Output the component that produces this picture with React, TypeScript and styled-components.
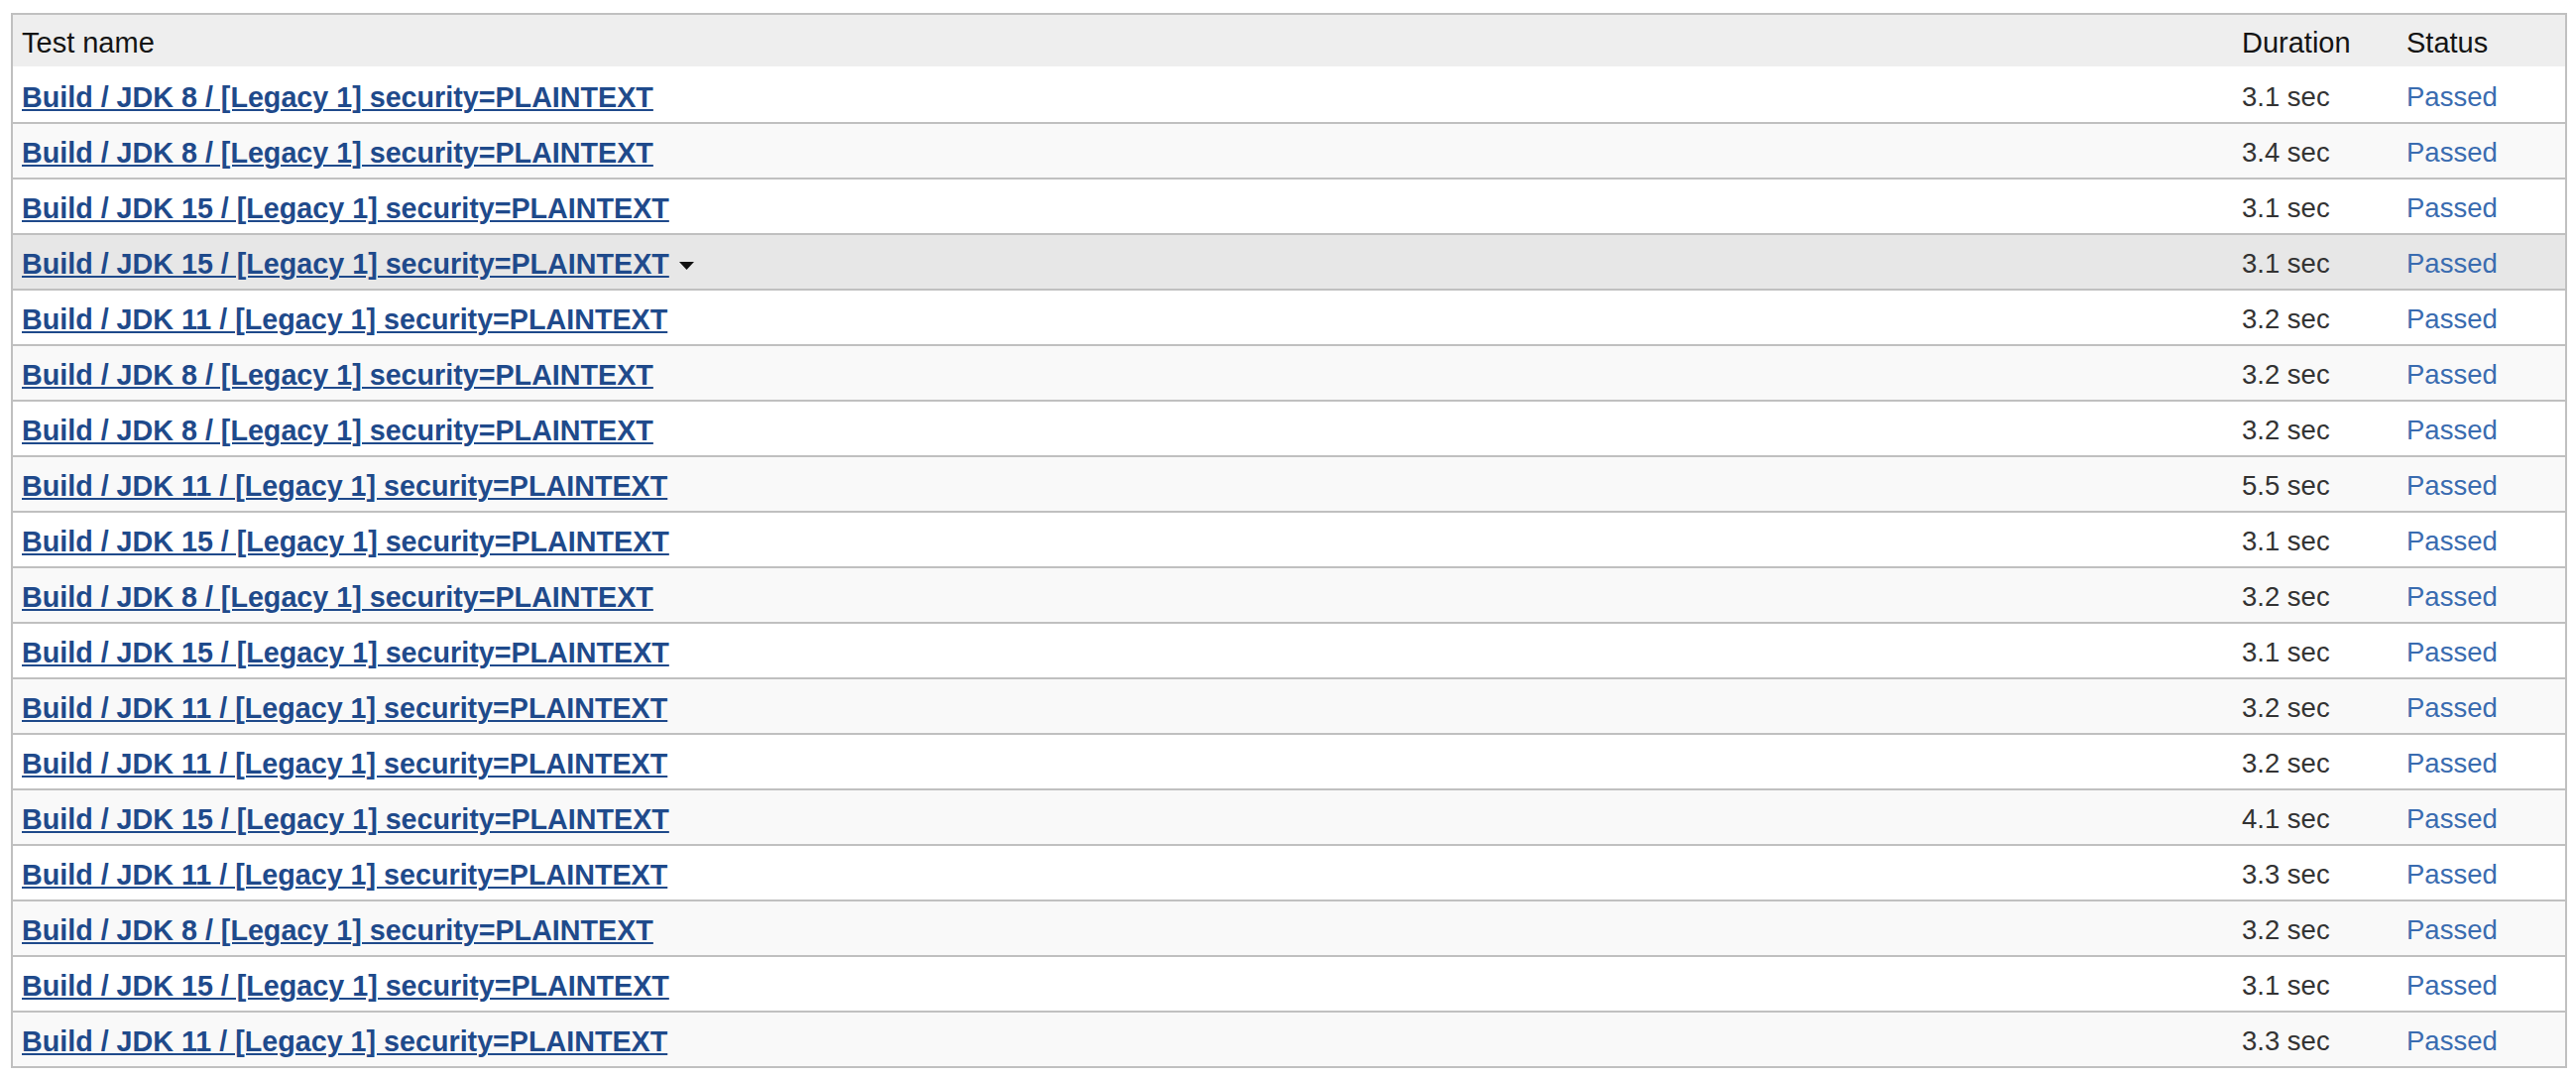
import React from "react";
import styled, { createGlobalStyle } from "styled-components";

const GlobalStyle = createGlobalStyle`
  html, body {
    margin: 0;
    padding: 0;
    background: #ffffff;
  }
  body {
    font-family: "Liberation Sans", Arial, Helvetica, sans-serif;
    color: #333333;
  }
`;

const Page = styled.div`
  padding: 13px 0 0 11px;
`;

const Table = styled.table`
  width: 2578px;
  border-collapse: separate;
  border-spacing: 0;
  border: 2px solid #c0c0c0;
  table-layout: fixed;
  font-size: 27.5px;
`;

const HeadCell = styled.th<{ $width?: number }>`
  ${(p) => (p.$width ? `width: ${p.$width}px;` : "")}
  text-align: left;
  font-weight: 400;
  font-size: 29px;
  color: #141414;
  background: #eeeeee;
  padding: 4px 0 0 9px;
  line-height: 48px;
  border-bottom: 2px solid #ffffff;
  white-space: nowrap;
`;

const Row = styled.tr<{ $hover?: boolean }>`
  background: ${(p) => (p.$hover ? "#e7e7e7" : "#ffffff")};
  &:nth-child(even) {
    background: ${(p) => (p.$hover ? "#e7e7e7" : "#f9f9f9")};
  }
  &:last-child td {
    border-bottom: none;
  }
`;

const Cell = styled.td<{ $tone?: "name" | "duration" | "status" }>`
  padding: 4px 0 0 9px;
  line-height: 50px;
  border-bottom: 2px solid #c0c0c0;
  white-space: nowrap;
  font-size: ${(p) => (p.$tone === "name" ? "28.7px" : "27.5px")};
  color: ${(p) =>
    p.$tone === "status" ? "#3a6cb0" : p.$tone === "duration" ? "#333333" : "#1f4a8b"};
`;

const TestLink = styled.a`
  color: #1f4a8b;
  font-weight: 700;
  text-decoration: underline;
  text-decoration-thickness: 2px;
  text-underline-offset: 2px;
  cursor: pointer;
`;

const StatusLink = styled.a`
  color: #3a6cb0;
  text-decoration: none;
`;

const Caret = styled.svg`
  display: inline-block;
  margin-left: 10px;
  vertical-align: 4px;
`;

type Test = { jdk: number; duration: string };

const tests: Test[] = [
  { jdk: 8, duration: "3.1" },
  { jdk: 8, duration: "3.4" },
  { jdk: 15, duration: "3.1" },
  { jdk: 15, duration: "3.1" },
  { jdk: 11, duration: "3.2" },
  { jdk: 8, duration: "3.2" },
  { jdk: 8, duration: "3.2" },
  { jdk: 11, duration: "5.5" },
  { jdk: 15, duration: "3.1" },
  { jdk: 8, duration: "3.2" },
  { jdk: 15, duration: "3.1" },
  { jdk: 11, duration: "3.2" },
  { jdk: 11, duration: "3.2" },
  { jdk: 15, duration: "4.1" },
  { jdk: 11, duration: "3.3" },
  { jdk: 8, duration: "3.2" },
  { jdk: 15, duration: "3.1" },
  { jdk: 11, duration: "3.3" },
];

const HOVER_INDEX = 3;

export default function App() {
  return (
    <>
      <GlobalStyle />
      <Page>
        <Table>
          <thead>
            <tr>
              <HeadCell>Test name</HeadCell>
              <HeadCell $width={157}>Duration</HeadCell>
              <HeadCell $width={160}>Status</HeadCell>
            </tr>
          </thead>
          <tbody>
            {tests.map((t, i) => (
              <Row key={i} $hover={i === HOVER_INDEX}>
                <Cell $tone="name">
                  <TestLink>{`Build / JDK ${t.jdk} / [Legacy 1] security=PLAINTEXT`}</TestLink>
                  {i === HOVER_INDEX && (
                    <Caret width="15" height="8" viewBox="0 0 15 8" aria-hidden="true">
                      <polygon points="0,0 15,0 7.5,8" fill="#111111" />
                    </Caret>
                  )}
                </Cell>
                <Cell $tone="duration">{t.duration} sec</Cell>
                <Cell $tone="status">
                  <StatusLink>Passed</StatusLink>
                </Cell>
              </Row>
            ))}
          </tbody>
        </Table>
      </Page>
    </>
  );
}
